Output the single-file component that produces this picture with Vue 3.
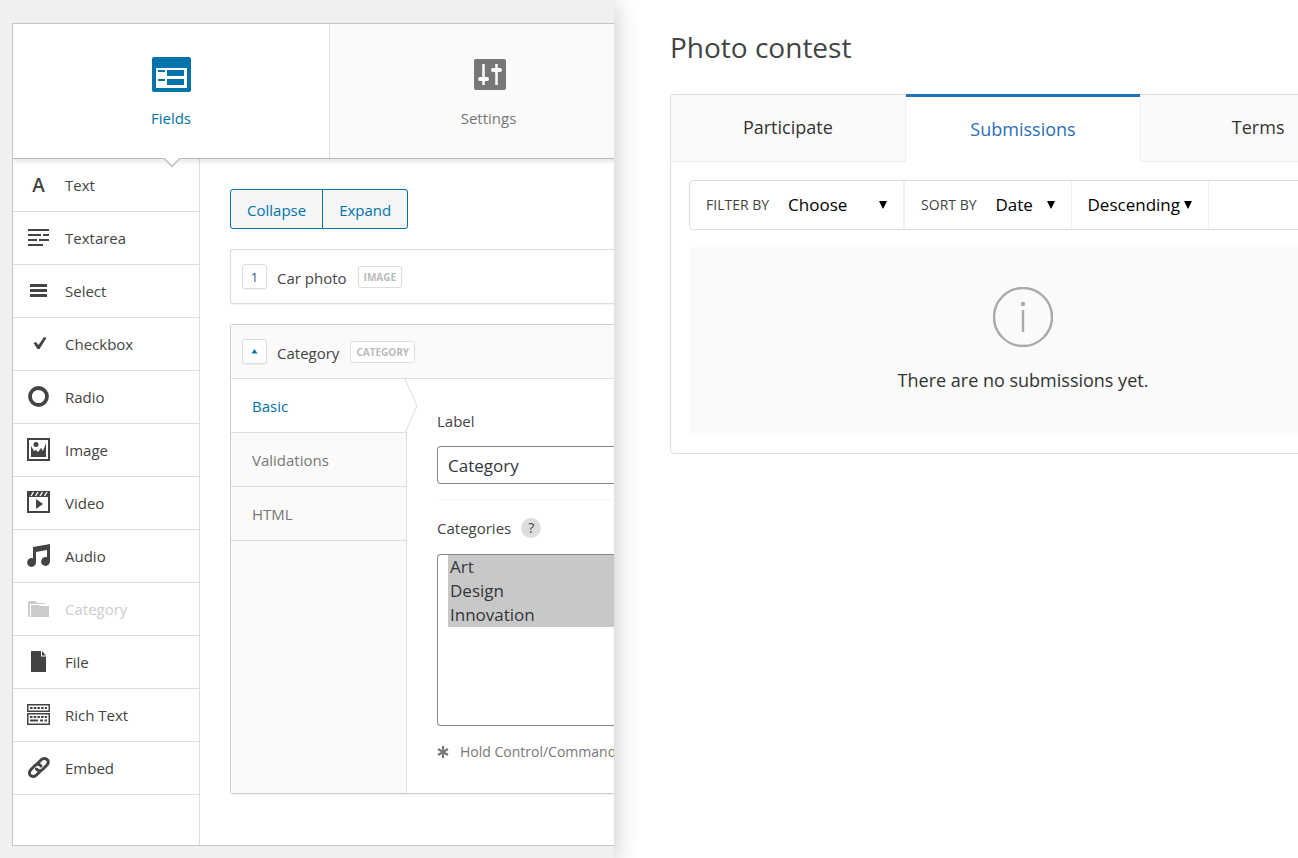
<script setup>
import { ref } from 'vue'

const fieldTypes = [
  { id: 'text', label: 'Text' },
  { id: 'textarea', label: 'Textarea' },
  { id: 'select', label: 'Select' },
  { id: 'checkbox', label: 'Checkbox' },
  { id: 'radio', label: 'Radio' },
  { id: 'image', label: 'Image' },
  { id: 'video', label: 'Video' },
  { id: 'audio', label: 'Audio' },
  { id: 'category', label: 'Category', disabled: true },
  { id: 'file', label: 'File' },
  { id: 'richtext', label: 'Rich Text' },
  { id: 'embed', label: 'Embed' },
]
const sections = ['Basic', 'Validations', 'HTML']
const tabs = ['Participate', 'Submissions', 'Terms']

const activeSection = ref('Basic')
const activeTab = ref('Submissions')
const label = ref('Category')
const categories = ref(['Art', 'Design', 'Innovation'])
</script>

<template>
  <div class="page">
    <section class="editor">
      <div class="panel">
        <nav class="main-tabs">
          <button class="main-tab active">
            <svg width="40" height="36" viewBox="0 0 40 36">
              <rect x="1" y="0" width="39" height="35" rx="2" fill="#0073aa" />
              <rect x="5" y="11" width="31" height="20" fill="#fff" />
              <path d="M7 13h7v2H7zM16 13h17v6H16zM7 22h7v2H7zM16 22h17v6H16z" fill="#0073aa" />
            </svg>
            <span>Fields</span>
          </button>
          <button class="main-tab">
            <svg width="40" height="36" viewBox="0 0 40 36">
              <rect x="5" y="2" width="32" height="31" rx="2" fill="#777" />
              <path d="M14.500 7v21M27.500 7v21" stroke="#fff" stroke-width="2.500" />
              <path d="M11 22h7M24 13h7" stroke="#fff" stroke-width="4" stroke-linecap="round" />
            </svg>
            <span>Settings</span>
          </button>
        </nav>

        <div class="panel-body">
          <ul class="types">
            <li v-for="type in fieldTypes" :key="type.id">
              <button class="type" :disabled="type.disabled">
                <svg class="type-icon" width="24" height="24" viewBox="0 0 24 24" fill="currentColor">
                  <text v-if="type.id === 'text'" x="12.500" y="19" text-anchor="middle" font-size="19" font-weight="600">A</text>
                  <path v-else-if="type.id === 'textarea'" d="M2 3h21v2H2zM2 8h13v2H2zM17 8h6v2h-6zM2 13h9v2H2zM13 13h10v2H13zM2 18h15v2H2z" />
                  <path v-else-if="type.id === 'select'" d="M4 5h17v3H4zM4 10h17v3H4zM4 15h17v3H4z" />
                  <path v-else-if="type.id === 'checkbox'" d="M7.500 11l2.500-1 2.500 3L18 5l2.500 1-7 11h-2z" />
                  <circle v-else-if="type.id === 'radio'" cx="12.500" cy="11.500" r="8.500" fill="none" stroke="currentColor" stroke-width="3.800" />
                  <g v-else-if="type.id === 'image'">
                    <path d="M1 0h23v23H1zM3 2v19h19V2z" fill-rule="evenodd" />
                    <circle cx="10" cy="6.500" r="2.500" />
                    <path d="M5 19V8l3 5 2-1 2 2 3-4 2 3 3-8v14z" />
                  </g>
                  <g v-else-if="type.id === 'video'">
                    <path d="M1 0h23v22H1zM3 6v14h19V6z" fill-rule="evenodd" />
                    <path d="M5 5l2.500-4M9.500 5L12 1M14 5l2.500-4M18.500 5L21 1" stroke="#fff" stroke-width="1.400" />
                    <path d="M10 8l7 5-7 5z" />
                  </g>
                  <g v-else-if="type.id === 'audio'">
                    <path d="M7 3l17-3v18h-3V6L10 8v11H7z" />
                    <circle cx="5.500" cy="18.500" r="4.400" />
                    <circle cx="19.500" cy="17.500" r="4.400" />
                  </g>
                  <g v-else-if="type.id === 'category'">
                    <path d="M2 20V5l1-1h7l1 2h8v1H4v13z" />
                    <path d="M5 8h8l1 1h9v11H5z" />
                  </g>
                  <path v-else-if="type.id === 'file'" d="M5 1h10v5.500h5V22H5zM16 1l4 4.500h-4z" />
                  <g v-else-if="type.id === 'richtext'">
                    <path d="M1 1h23v8H1zM2.500 2.500v5h20v-5zM1 10h23v12H1zM2.500 11.500v9h20v-9z" fill-rule="evenodd" />
                    <path d="M4 5h17M4 14h17" stroke="currentColor" stroke-width="2" stroke-dasharray="2.500 1.200" />
                    <path d="M4 16.500h8v2H4zM14 16.500h3v2h-3zM18.500 16.500h2.500v2h-2.500z" />
                  </g>
                  <g v-else fill="none" stroke="currentColor" stroke-width="3" stroke-linecap="round">
                    <path d="M11 8l4-4c2-2 4-2 6-.500s1.500 4-.500 6l-4 4c-2 2-4.500 1.500-6-.500" />
                    <path d="M14.500 15l-4 4c-2 2-4.500 1.500-6 .500s-1.500-4 .500-6l4-4c2-2 4.500-1.500 6 .500" />
                  </g>
                </svg>
                {{ type.label }}
              </button>
            </li>
          </ul>

          <div class="fields">
            <div class="bulk">
              <button>Collapse</button>
              <button>Expand</button>
            </div>

            <article class="field">
              <header class="field-head">
                <button class="toggle">1</button>
                <span class="field-title">Car photo</span>
                <span class="badge">IMAGE</span>
              </header>
            </article>

            <article class="field open">
              <header class="field-head">
                <button class="toggle" aria-label="Collapse field">
                  <svg width="7" height="5" viewBox="0 0 7 5"><path d="M3.500 0L6.500 4.500h-6z" fill="#0073aa" /></svg>
                </button>
                <span class="field-title">Category</span>
                <span class="badge">CATEGORY</span>
              </header>
              <div class="field-body">
                <nav class="sections">
                  <button
                    v-for="section in sections"
                    :key="section"
                    class="section"
                    :class="{ active: section === activeSection }"
                    @click="activeSection = section"
                  >
                    {{ section }}
                    <svg v-if="section === activeSection" class="section-arrow" width="14" height="54" viewBox="0 0 14 54">
                      <path d="M0 0h1l12 27L1 54H0z" fill="#fff" />
                      <path d="M1 0l12 27L1 54" fill="none" stroke="#ddd" />
                    </svg>
                  </button>
                </nav>
                <form class="settings" @submit.prevent>
                  <label for="field-label">Label</label>
                  <input id="field-label" v-model="label" type="text" />
                  <hr />
                  <div class="label-row">
                    <label for="field-categories">Categories</label>
                    <button type="button" class="help">?</button>
                  </div>
                  <select id="field-categories" v-model="categories" multiple>
                    <option>Art</option>
                    <option>Design</option>
                    <option>Innovation</option>
                  </select>
                  <p class="hint">
                    <svg width="12" height="12" viewBox="0 0 12 12">
                      <path d="M6 0v12M1 3l10 6M11 3L1 9" stroke="currentColor" stroke-width="2.200" />
                    </svg>
                    Hold Control/Command
                  </p>
                </form>
              </div>
            </article>
          </div>
        </div>
      </div>
    </section>

    <main class="preview">
      <h1>Photo contest</h1>
      <div class="contest">
        <nav class="tabs">
          <button
            v-for="tab in tabs"
            :key="tab"
            class="tab"
            :class="{ active: tab === activeTab }"
            @click="activeTab = tab"
          >
            {{ tab }}
          </button>
        </nav>
        <div class="contest-body">
          <div class="filters">
            <div class="filter">
              <label for="filter">FILTER BY</label>
              <div class="drop choose">
                <select id="filter"><option>Choose</option></select>
                <svg class="drop-arrow" width="8" height="8" viewBox="0 0 8 8"><path d="M0 0h8L4 8z" /></svg>
              </div>
            </div>
            <div class="filter">
              <label for="sort">SORT BY</label>
              <div class="drop date">
                <select id="sort"><option>Date</option></select>
                <svg class="drop-arrow" width="8" height="8" viewBox="0 0 8 8"><path d="M0 0h8L4 8z" /></svg>
              </div>
            </div>
            <div class="filter">
              <div class="drop order">
                <select aria-label="Order"><option>Descending</option></select>
                <svg class="drop-arrow" width="8" height="8" viewBox="0 0 8 8"><path d="M0 0h8L4 8z" /></svg>
              </div>
            </div>
          </div>
          <div class="empty">
            <svg width="60" height="60" viewBox="0 0 60 60">
              <circle cx="30" cy="30" r="29" fill="none" stroke="#aaa" stroke-width="2.400" />
              <circle cx="30" cy="17" r="2.200" fill="#aaa" />
              <path d="M30 23v22" stroke="#aaa" stroke-width="2.400" />
            </svg>
            <p>There are no submissions yet.</p>
          </div>
        </div>
      </div>
    </main>
  </div>
</template>

<style>
body {
  margin: 0;
  background: #fff;
}
</style>

<style scoped>
* {
  box-sizing: border-box;
}
.page {
  display: grid;
  grid-template-columns: 614fr 684fr;
  min-height: 100vh;
  overflow: hidden;
  font-family: 'Open Sans', 'Noto Sans', sans-serif;
  font-size: 15px;
  line-height: 20px;
  color: #444;
}
button,
input,
select {
  font: inherit;
  color: inherit;
}
button {
  cursor: pointer;
}
.editor {
  position: relative;
  z-index: 1;
  min-width: 0;
  padding: 23px 0 12px 12px;
  background: #f0f0f0;
  box-shadow: 0 4px 24px rgba(0, 0, 0, 0.24);
  clip-path: inset(0 -40px 0 0);
}
.panel {
  display: flex;
  flex-direction: column;
  height: 100%;
  overflow: hidden;
  background: #fff;
  border: 1px solid #c5c5c5;
  border-right: none;
}
.main-tabs {
  position: relative;
  z-index: 1;
  display: grid;
  grid-template-columns: 1fr 1fr;
  flex: none;
  height: 135px;
  margin-right: -33px;
  background: #fafafa;
  border-bottom: 1px solid #b8b8b8;
  box-shadow: 0 2px 6px rgba(0, 0, 0, 0.12);
}
.main-tab {
  display: flex;
  flex-direction: column;
  align-items: center;
  gap: 15px;
  padding: 33px 0 0;
  border: none;
  background: none;
  color: #777;
}
.main-tab.active {
  position: relative;
  background: #fff;
  border-right: 1px solid #ddd;
  color: #0073aa;
}
.main-tab.active::after {
  content: '';
  position: absolute;
  bottom: -7px;
  left: 50%;
  width: 12px;
  height: 12px;
  margin-left: -6px;
  background: #fff;
  border: solid #c8c8c8;
  border-width: 0 2px 2px 0;
  transform: rotate(45deg);
  clip-path: polygon(100% 0, 100% 100%, 0 100%);
}
.panel-body {
  display: flex;
  flex: 1;
}
.types {
  flex: none;
  width: 187px;
  margin: 0;
  padding: 0;
  list-style: none;
  border-right: 1px solid #ddd;
}
.type {
  display: flex;
  align-items: center;
  gap: 15px;
  width: 100%;
  height: 53px;
  padding: 0 13px;
  border: none;
  border-bottom: 1px solid #ddd;
  background: #fff;
  text-align: left;
}
.type:disabled {
  color: #ccc;
  cursor: default;
}
.fields {
  flex: 1;
  min-width: 0;
  padding: 30px 0 0 30px;
}
.bulk {
  display: flex;
  margin-bottom: 20px;
}
.bulk button {
  height: 40px;
  padding: 2px 16px 0;
  border: 1px solid #0073aa;
  background: #f3f5f6;
  color: #0073aa;
}
.bulk button:first-child {
  border-radius: 3px 0 0 3px;
}
.bulk button:last-child {
  margin-left: -1px;
  border-radius: 0 3px 3px 0;
}
.field {
  margin-bottom: 20px;
  border: 1px solid #ddd;
  border-right: none;
  border-radius: 3px 0 0 3px;
  box-shadow: 0 1px 1px rgba(0, 0, 0, 0.05);
}
.field.open {
  border-color: #ccc;
}
.field-head {
  display: flex;
  align-items: center;
  height: 53px;
  padding: 0 11px;
}
.open .field-head {
  height: 54px;
  background: #fafafa;
  border-bottom: 1px solid #ddd;
}
.toggle {
  display: flex;
  align-items: center;
  justify-content: center;
  width: 25px;
  height: 25px;
  padding: 0;
  border: 1px solid #ddd;
  border-radius: 3px;
  background: #fff;
  box-shadow: 0 1px 1px rgba(0, 0, 0, 0.06);
  font-size: 13px;
  color: #357;
}
.field-title {
  margin: 2px 11px 0 10px;
}
.badge {
  padding: 0 5px;
  border: 1px solid #ddd;
  border-radius: 3px;
  background: #fff;
  font-size: 10px;
  font-weight: 700;
  color: #bbb;
}
.field-body {
  display: flex;
  height: 414px;
}
.sections {
  flex: none;
  width: 176px;
  background: #fafafa;
  border-right: 1px solid #ddd;
}
.section {
  display: block;
  width: 100%;
  height: 54px;
  padding: 0 21px;
  border: none;
  border-bottom: 1px solid #ddd;
  background: none;
  text-align: left;
  color: #777;
}
.section.active {
  position: relative;
  width: 176px;
  background: #fff;
  color: #0073aa;
}
.section-arrow {
  position: absolute;
  top: 0;
  right: -11px;
}
.settings {
  display: flex;
  flex-direction: column;
  flex: 1;
  min-width: 0;
  padding: 32px 0 0 30px;
}
.settings input {
  height: 38px;
  margin-top: 15px;
  padding: 0 10px;
  border: 1px solid #7e8993;
  border-right: none;
  border-radius: 4px 0 0 4px;
  background: #fff;
  font-size: 17px;
  color: #32373c;
}
.settings hr {
  width: 100%;
  margin: 15px 0 18px;
  border: none;
  border-top: 1px solid #f5f5f5;
}
.label-row {
  display: flex;
  align-items: center;
  gap: 10px;
}
.help {
  width: 20px;
  height: 20px;
  padding: 0;
  border: none;
  border-radius: 50%;
  background: #ddd;
  font-size: 14px;
}
.settings select {
  height: 172px;
  margin-top: 16px;
  padding: 0 0 0 10px;
  border: 1px solid #7e8993;
  border-right: none;
  border-radius: 4px 0 0 4px;
  outline: none;
  background: #fff;
  overflow: hidden;
  font-size: 17px;
  color: #32373c;
}
.settings option {
  height: 24px;
  padding: 0 2px;
  line-height: 24px;
}
.settings option:checked {
  background: #c8c8c8 linear-gradient(#c8c8c8, #c8c8c8);
  color: #32373c;
}
.hint {
  display: flex;
  align-items: center;
  gap: 11px;
  margin: 16px 0 0;
  white-space: nowrap;
  font-size: 14px;
  color: #777;
}
.hint svg {
  flex: none;
}
.preview {
  min-width: 0;
  padding: 29px 0 0 56px;
}
.preview h1 {
  margin: 0 0 29px;
  font-size: 28px;
  line-height: 36px;
  font-weight: 400;
}
.contest {
  margin-right: -78px;
  border: 1px solid #ddd;
  border-radius: 4px;
}
.tabs {
  display: grid;
  grid-template-columns: 1fr 1fr 1fr;
  margin-top: -1px;
}
.tab {
  height: 68px;
  padding: 0 0 2px;
  border: solid #eee;
  border-width: 1px 0;
  border-top-color: #ddd;
  background: #fafafa;
  font-size: 18px;
  color: #333;
}
.tab:first-child {
  border-top-left-radius: 4px;
}
.tab.active {
  padding: 0;
  border-top: 3px solid #1e73be;
  border-bottom-color: #fff;
  background: #fff;
  color: #2a6ebb;
}
.tab:not(.active) + .tab:not(.active),
.tab.active + .tab {
  border-left: 1px solid #eee;
}
.tab:has(+ .active) {
  border-right: 1px solid #eee;
}
.contest-body {
  padding: 18px;
}
.filters {
  display: flex;
  height: 50px;
  margin-bottom: 17px;
  border: 1px solid #ddd;
  border-radius: 4px;
}
.filter {
  display: flex;
  align-items: center;
  gap: 19px;
  padding: 0 16px;
  border-right: 1px solid #eee;
}
.filter:first-child {
  border-right-width: 2px;
}
.filter label {
  font-size: 14px;
}
.drop {
  position: relative;
}
.drop select {
  width: 100%;
  padding: 0;
  border: none;
  outline: none;
  appearance: none;
  background: none;
  font-size: 17px;
  line-height: 24px;
  color: #000;
}
.drop-arrow {
  position: absolute;
  top: 8px;
  right: 0;
  pointer-events: none;
}
.choose {
  width: 99px;
}
.date {
  width: 59px;
}
.order {
  width: 104px;
}
.empty {
  display: flex;
  flex-direction: column;
  align-items: center;
  padding: 40px 0 42px;
  background: #fafafa;
  border-radius: 4px;
}
.empty p {
  margin: 20px 0 0;
  font-size: 18px;
  line-height: 26px;
  color: #333;
}
</style>
